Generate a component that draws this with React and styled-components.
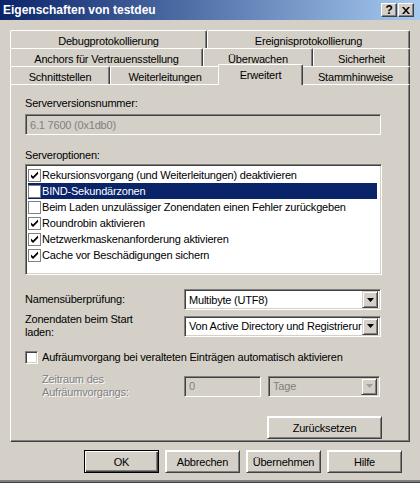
import styled, { createGlobalStyle } from "styled-components";

const GlobalStyle = createGlobalStyle`
  html, body { margin: 0; padding: 0; background: #d4d0c8; }
  body {
    font-family: "Liberation Sans", Arial, sans-serif;
    font-size: 11px;
    letter-spacing: -0.2px;
    color: #000;
  }
  * { box-sizing: border-box; }
`

const Window = styled.div`
  width: 420px;
  height: 483px;
  background: #d4d0c8;
  display: flex;
  flex-direction: column;
  border-bottom: 1px solid #404040;
  box-shadow: inset 0 -2px #808080;
`

const TitleBar = styled.div`
  height: 20px;
  display: flex;
  align-items: center;
  justify-content: space-between;
  padding: 0 6px 0 3px;
  background: linear-gradient(90deg, #0a246a 0%, #a6caf0 100%);
`

const Title = styled.div`
  color: #fff;
  font-weight: bold;
  font-size: 12px;
  letter-spacing: 0;
`

const TitleButtons = styled.div`
  display: flex;
  gap: 1px;
`

const CaptionButton = styled.div`
  width: 16px;
  height: 14px;
  display: flex;
  align-items: center;
  justify-content: center;
  background: #d4d0c8;
  border-top: 1px solid #fff;
  border-left: 1px solid #fff;
  border-right: 1px solid #404040;
  border-bottom: 1px solid #404040;
  box-shadow: inset -1px -1px #808080;
  font-weight: bold;
  font-size: 12px;
  line-height: 1;
`

const Body = styled.div`
  padding: 10px 10px 0;
  display: flex;
  flex-direction: column;
`

const TabRow = styled.div`
  display: flex;
  height: 18px;
  position: relative;
  z-index: ${(p) => (p.$front ? 2 : 1)};
`

const Tab = styled.div`
  flex: 0 0 ${(p) => p.$w}px;
  height: 18px;
  display: flex;
  align-items: center;
  justify-content: center;
  padding-top: 2px;
  background: #d4d0c8;
  border-top: 1px solid #fff;
  border-left: 1px solid #fff;
  border-right: 1px solid #404040;
  border-top-left-radius: 2px;
  border-top-right-radius: 2px;
  box-shadow: inset -1px 0 #808080;
  white-space: nowrap;
`

const ActiveTab = styled(Tab)`
  flex-basis: ${(p) => p.$w + 4}px;
  height: 21px;
  margin: -2px -2px 0;
  padding-top: 0;
  position: relative;
  z-index: 3;
`

const Panel = styled.div`
  height: 358px;
  border-top: 1px solid #fff;
  border-left: 1px solid #fff;
  border-right: 1px solid #404040;
  border-bottom: 1px solid #404040;
  box-shadow: inset -1px -1px #808080;
  padding: 12px 0 0 14px;
  display: flex;
  flex-direction: column;
`

const Label = styled.div`
  line-height: 13px;
  color: ${(p) => (p.$disabled ? "#808080" : "#000")};
  text-shadow: ${(p) => (p.$disabled ? "1px 1px 0 #fff" : "none")};
`

const Sunken = styled.div`
  border-top: 1px solid #808080;
  border-left: 1px solid #808080;
  border-right: 1px solid #fff;
  border-bottom: 1px solid #fff;
  box-shadow: inset 1px 1px #404040, inset -1px -1px #d4d0c8;
`

const TextBox = styled(Sunken)`
  width: ${(p) => p.$w}px;
  height: 21px;
  padding: 0 4px;
  display: flex;
  align-items: center;
  background: ${(p) => (p.$disabled ? "#d4d0c8" : "#fff")};
  color: ${(p) => (p.$disabled ? "#808080" : "#000")};
`

const ListBox = styled(Sunken)`
  width: 357px;
  height: 111px;
  background: #fff;
  padding: 2px;
`

const ListItem = styled.div`
  height: 16px;
  display: flex;
  align-items: center;
  gap: 1px;
  background: ${(p) => (p.$selected ? "#0a246a" : "transparent")};
  color: ${(p) => (p.$selected ? "#fff" : "#000")};
  margin-right: 2px;
`

const FlatCheck = styled.div`
  width: 13px;
  height: 13px;
  flex: 0 0 13px;
  background: #fff;
  border: 1px solid #808080;
  display: flex;
  align-items: center;
  justify-content: center;
`

const Check3D = styled(Sunken)`
  width: 13px;
  height: 13px;
  flex: 0 0 13px;
  background: #fff;
`

const FieldRow = styled.div`
  display: flex;
  align-items: center;
  margin-top: ${(p) => p.$mt}px;
  padding-left: ${(p) => p.$indent || 0}px;
`

const FieldLabel = styled(Label)`
  width: ${(p) => p.$w}px;
  flex: 0 0 ${(p) => p.$w}px;
`

const Combo = styled(Sunken)`
  width: ${(p) => p.$w}px;
  height: 21px;
  display: flex;
  align-items: center;
  padding: 2px;
  margin-left: ${(p) => p.$ml || 0}px;
  background: ${(p) => (p.$disabled ? "#d4d0c8" : "#fff")};
  color: ${(p) => (p.$disabled ? "#808080" : "#000")};
`

const ComboText = styled.div`
  flex: 1;
  min-width: 0;
  overflow: hidden;
  white-space: nowrap;
  padding-left: 2px;
`

const DropButton = styled.div`
  width: 16px;
  height: 17px;
  flex: 0 0 16px;
  display: flex;
  align-items: center;
  justify-content: center;
  background: #d4d0c8;
  border-top: 1px solid #d4d0c8;
  border-left: 1px solid #d4d0c8;
  border-right: 1px solid #404040;
  border-bottom: 1px solid #404040;
  box-shadow: inset 1px 1px #fff, inset -1px -1px #808080;
`

const CheckRow = styled.div`
  display: flex;
  align-items: center;
  gap: 4px;
  margin-top: 12px;
  line-height: 13px;
`

const Button = styled.div`
  width: ${(p) => p.$w || 75}px;
  height: 23px;
  display: flex;
  align-items: center;
  justify-content: center;
  background: #d4d0c8;
  border: 1px solid ${(p) => (p.$default ? "#000" : "transparent")};
  box-shadow: ${(p) =>
    p.$default
      ? "inset 1px 1px #fff, inset -1px -1px #404040, inset -2px -2px #808080"
      : "inset 1px 1px #fff, inset -1px -1px #808080"};
  ${(p) =>
    !p.$default &&
    `border-color: #fff #404040 #404040 #fff;`}
`

const ResetRow = styled.div`
  display: flex;
  justify-content: flex-end;
  width: 357px;
  margin-top: 17px;
`

const ButtonBar = styled.div`
  display: flex;
  justify-content: flex-end;
  gap: 6px;
  padding: 8px 8px 0 0;
`

const Arrow = ({ color = "#000" }) => (
  <svg width="7" height="4" viewBox="0 0 7 4">
    <path d="M0 0h7L3.5 4z" fill={color} />
  </svg>
);

const Tick = ({ color = "#000" }) => (
  <svg width="9" height="9" viewBox="0 0 9 9">
    <path d="M1 3.5l2 2 5-5v2.5L3 8 1 6z" fill={color} />
  </svg>
);

const options = [
  { id: 1, title: "Rekursionsvorgang (und Weiterleitungen) deaktivieren", checked: true },
  { id: 2, title: "BIND-Sekundärzonen", checked: false, selected: true },
  { id: 3, title: "Beim Laden unzulässiger Zonendaten einen Fehler zurückgeben", checked: false },
  { id: 4, title: "Roundrobin aktivieren", checked: true },
  { id: 5, title: "Netzwerkmaskenanforderung aktivieren", checked: true },
  { id: 6, title: "Cache vor Beschädigungen sichern", checked: true },
];

const tabRows = [
  [
    { title: "Debugprotokollierung", w: 197 },
    { title: "Ereignisprotokollierung", w: 203 },
  ],
  [
    { title: "Anchors für Vertrauensstellung", w: 193 },
    { title: "Überwachen", w: 110 },
    { title: "Sicherheit", w: 97 },
  ],
  [
    { title: "Schnittstellen", w: 100 },
    { title: "Weiterleitungen", w: 110 },
    { title: "Erweitert", w: 81, active: true },
    { title: "Stammhinweise", w: 109 },
  ],
];

const App = () => {
  return (
    <>
      <GlobalStyle />
      <Window>
        <TitleBar>
          <Title>Eigenschaften von testdeu</Title>
          <TitleButtons>
            <CaptionButton>?</CaptionButton>
            <CaptionButton>
              <svg width="8" height="7" viewBox="0 0 8 7">
                <path d="M0 0h2l2 2.5L6 0h2L5 3.5 8 7H6L4 4.5 2 7H0l3-3.5z" fill="#000" />
              </svg>
            </CaptionButton>
          </TitleButtons>
        </TitleBar>
        <Body>
          {tabRows.map((row, i) => (
            <TabRow key={i} $front={i === 2}>
              {row.map((tab) =>
                tab.active ? (
                  <ActiveTab key={tab.title} $w={tab.w}>{tab.title}</ActiveTab>
                ) : (
                  <Tab key={tab.title} $w={tab.w}>{tab.title}</Tab>
                )
              )}
            </TabRow>
          ))}
          <Panel>
            <Label>Serverversionsnummer:</Label>
            <TextBox $w={356} $disabled style={{ marginTop: 4 }}>6.1 7600 (0x1db0)</TextBox>
            <Label style={{ marginTop: 14 }}>Serveroptionen:</Label>
            <ListBox style={{ marginTop: 2 }}>
              {options.map((o) => (
                <ListItem key={o.id} $selected={o.selected}>
                  <FlatCheck>{o.checked && <Tick />}</FlatCheck>
                  <span>{o.title}</span>
                </ListItem>
              ))}
            </ListBox>
            <FieldRow $mt={14}>
              <FieldLabel $w={159}>Namensüberprüfung:</FieldLabel>
              <Combo $w={197}>
                <ComboText>Multibyte (UTF8)</ComboText>
                <DropButton><Arrow /></DropButton>
              </Combo>
            </FieldRow>
            <FieldRow $mt={3}>
              <FieldLabel $w={159}>Zonendaten beim Start<br />laden:</FieldLabel>
              <Combo $w={197}>
                <ComboText>Von Active Directory und Registrierur</ComboText>
                <DropButton><Arrow /></DropButton>
              </Combo>
            </FieldRow>
            <CheckRow>
              <Check3D />
              <span>Aufräumvorgang bei veralteten Einträgen automatisch aktivieren</span>
            </CheckRow>
            <FieldRow $mt={9} $indent={17}>
              <FieldLabel $w={142} $disabled>Zeitraum des<br />Aufräumvorgangs:</FieldLabel>
              <TextBox $w={77} $disabled>0</TextBox>
              <Combo $w={112} $ml={7} $disabled>
                <ComboText>Tage</ComboText>
                <DropButton><Arrow color="#a0a0a0" /></DropButton>
              </Combo>
            </FieldRow>
            <ResetRow>
              <Button $w={115}>Zurücksetzen</Button>
            </ResetRow>
          </Panel>
          <ButtonBar>
            <Button $default>OK</Button>
            <Button>Abbrechen</Button>
            <Button>Übernehmen</Button>
            <Button>Hilfe</Button>
          </ButtonBar>
        </Body>
      </Window>
    </>
  );
};

export default App;
